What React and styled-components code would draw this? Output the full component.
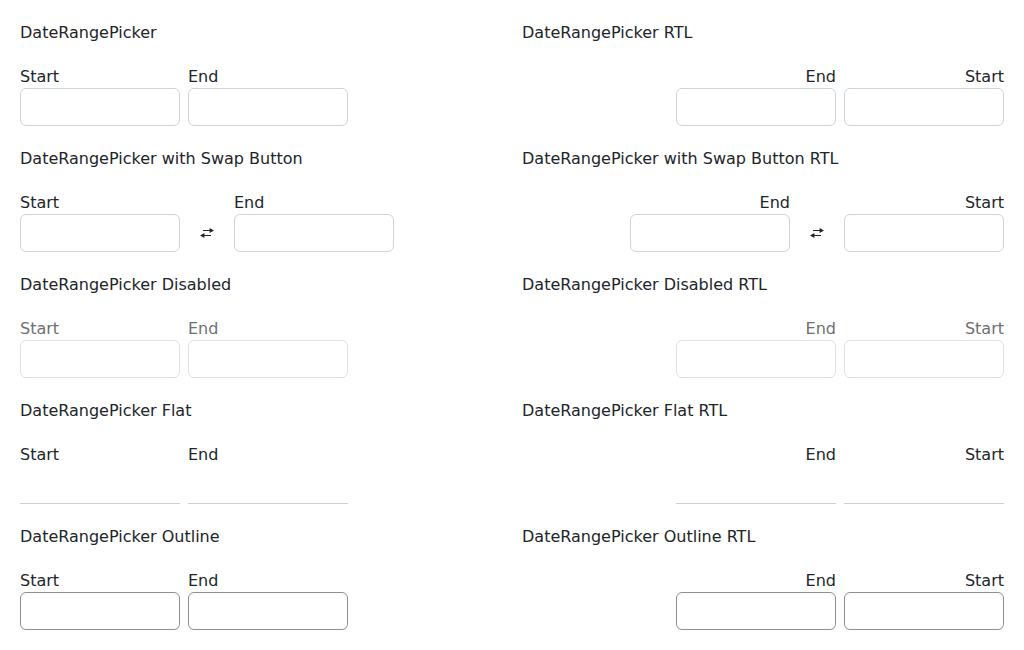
import React from "react";
import styled, { createGlobalStyle } from "styled-components";

const Global = createGlobalStyle`
  *, *::before, *::after { box-sizing: border-box; }
  body {
    margin: 0;
    background: #fff;
    color: #212529;
    font-family: "DejaVu Sans", sans-serif;
    font-size: 16px;
    line-height: 26px;
  }
`;

const Page = styled.main`
  display: grid;
  grid-template-columns: 482px 482px;
  column-gap: 20px;
  padding: 20px 20px 0;
`;

const Example = styled.section`
  height: 126px;
`;

const Title = styled.p`
  margin: 0 0 20px;
`;

const Range = styled.div`
  display: flex;
  align-items: flex-end;
  gap: 8px;
  color: ${(p) => (p.$variant === "disabled" ? "#6e6f70" : "inherit")};
`;

const Field = styled.label`
  display: flex;
  flex-direction: column;
  width: 160px;
  line-height: 22px;
`;

const borders = {
  solid: "1px solid #ced4da",
  disabled: "1px solid #dfe1e7",
  flat: "1px solid #d0d1d6",
  outline: "1px solid #8f9091",
};

const Input = styled.input`
  width: 160px;
  height: 38px;
  margin: 0;
  padding: 8px;
  font: inherit;
  outline: none;
  background: #fff;
  border: ${(p) => (p.$variant === "flat" ? "0" : borders[p.$variant])};
  border-bottom: ${(p) => borders[p.$variant]};
  border-radius: ${(p) => (p.$variant === "flat" ? "0" : "6px")};
`;

const SwapButton = styled.button`
  display: flex;
  align-items: center;
  justify-content: center;
  width: 38px;
  height: 38px;
  padding: 0;
  border: 0;
  background: transparent;
  color: #212529;
`;

const SwapIcon = () => (
  <svg width="16" height="16" viewBox="0 0 16 16" fill="currentColor">
    <path d="M4 4.9h6.6V2.9l4.4 2.6-4.4 2.6V6.1H4zM12 9.9H5.4V7.9L1 10.5l4.4 2.6v-2H12z" />
  </svg>
);

const DateRangePicker = ({ variant = "solid", swap, dir }) => (
  <Range dir={dir} $variant={variant}>
    <Field>
      Start
      <Input $variant={variant} disabled={variant === "disabled"} />
    </Field>
    {swap && (
      <SwapButton type="button" aria-label="Swap">
        <SwapIcon />
      </SwapButton>
    )}
    <Field>
      End
      <Input $variant={variant} disabled={variant === "disabled"} />
    </Field>
  </Range>
);

const examples = [
  { name: "DateRangePicker" },
  { name: "DateRangePicker with Swap Button", swap: true },
  { name: "DateRangePicker Disabled", variant: "disabled" },
  { name: "DateRangePicker Flat", variant: "flat" },
  { name: "DateRangePicker Outline", variant: "outline" },
];

export default function App() {
  return (
    <>
      <Global />
      <Page>
        {examples.map(({ name, ...rest }) => (
          <React.Fragment key={name}>
            <Example>
              <Title>{name}</Title>
              <DateRangePicker {...rest} dir="ltr" />
            </Example>
            <Example>
              <Title>{name} RTL</Title>
              <DateRangePicker {...rest} dir="rtl" />
            </Example>
          </React.Fragment>
        ))}
      </Page>
    </>
  );
}
